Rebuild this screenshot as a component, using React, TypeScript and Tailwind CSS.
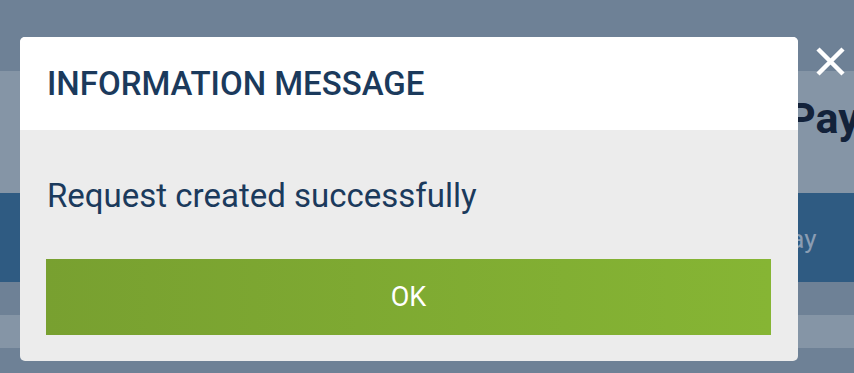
import React from 'react';

export default function App() {
  return (
    <div className="relative h-[373px] w-[854px] overflow-hidden bg-[#6e8196] font-['Roboto',sans-serif]">
      {/* page behind the overlay */}
      <div className="flex flex-col">
        <div className="h-[71px] bg-[#6e8196]" />
        <div className="h-[122px] whitespace-nowrap bg-[#8595a6] pl-[788px] pt-[26px]">
          <span className="text-[43px] font-bold leading-none text-[#13223a]">Pay</span>
        </div>
        <div className="flex h-[89px] items-center bg-[#2f5b82] pl-[774px] pt-[4px]">
          <span className="text-[26px] text-[#8a9db3]">Pay</span>
        </div>
        <div className="h-[33px] bg-[#6e8196]" />
        <div className="h-[33px] bg-[#8595a6]" />
      </div>

      <button className="absolute left-[815px] top-[47px] text-white">
        <svg width="31" height="29" viewBox="0 0 31 29">
          <path d="M3 2 L28 27 M28 2 L3 27" stroke="currentColor" strokeWidth="4.5" fill="none" />
        </svg>
      </button>

      <div className="absolute left-[20px] top-[37px] flex h-[324px] w-[778px] flex-col overflow-hidden rounded-[5px] bg-[#ececec]">
        <div className="flex h-[93px] items-center bg-white px-[27px]">
          <h2 className="text-[33px] font-medium text-[#1b3a5c]">INFORMATION MESSAGE</h2>
        </div>
        <div className="flex flex-1 flex-col px-[26px]">
          <p className="mt-[49px] pl-[1px] text-[33px] leading-none text-[#1b3a5c]">Request created successfully</p>
          <button className="mt-[47px] h-[76px] w-[725px] bg-gradient-to-r from-[#78a030] to-[#86b534] text-[27px] text-white">
            OK
          </button>
        </div>
      </div>
    </div>
  );
}
